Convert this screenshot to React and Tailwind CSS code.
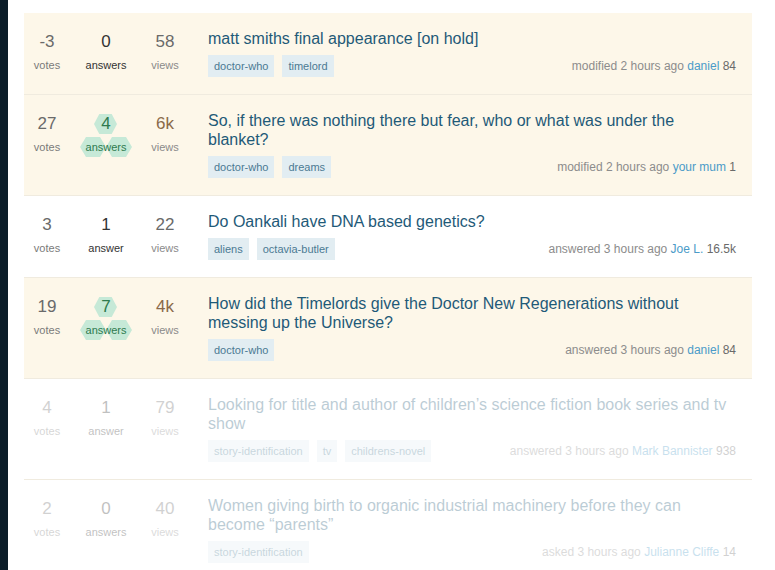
import React from 'react'

const questions = [
  {
    votes: '-3', answers: '0', views: '58', answered: false, hotViews: false,
    title: 'matt smiths final appearance [on hold]',
    tags: ['doctor-who', 'timelord'],
    action: 'modified 2 hours ago', user: 'daniel', rep: '84',
    bg: 'bg-[#fdf7e9]',
  },
  {
    votes: '27', answers: '4', views: '6k', answered: true, hotViews: true,
    title: 'So, if there was nothing there but fear, who or what was under the blanket?',
    tags: ['doctor-who', 'dreams'],
    action: 'modified 2 hours ago', user: 'your mum', rep: '1',
    bg: 'bg-[#fdf7e9]',
  },
  {
    votes: '3', answers: '1', views: '22', answered: false, hotViews: false, single: true,
    title: 'Do Oankali have DNA based genetics?',
    tags: ['aliens', 'octavia-butler'],
    action: 'answered 3 hours ago', user: 'Joe L.', rep: '16.5k',
    bg: 'bg-white',
  },
  {
    votes: '19', answers: '7', views: '4k', answered: true, hotViews: true,
    title: 'How did the Timelords give the Doctor New Regenerations without messing up the Universe?',
    tags: ['doctor-who'],
    action: 'answered 3 hours ago', user: 'daniel', rep: '84',
    bg: 'bg-[#fdf7e9]',
  },
  {
    votes: '4', answers: '1', views: '79', answered: false, hotViews: false, single: true, faded: true,
    title: "Looking for title and author of children\u2019s science fiction book series and tv show",
    tags: ['story-identification', 'tv', 'childrens-novel'],
    action: 'answered 3 hours ago', user: 'Mark Bannister', rep: '938',
    bg: 'bg-white',
  },
  {
    votes: '2', answers: '0', views: '40', answered: false, hotViews: false, faded: true,
    title: 'Women giving birth to organic industrial machinery before they can become \u201cparents\u201d',
    tags: ['story-identification'],
    action: 'asked 3 hours ago', user: 'Julianne Cliffe', rep: '14',
    bg: 'bg-white',
  },
]

function Hex({ className }) {
  return (
    <svg viewBox="0 0 26 20" preserveAspectRatio="none" className={className}>
      <polygon points="6,0 20,0 26,10 20,20 6,20 0,10" fill="#c6e9d7" />
    </svg>
  )
}

function AnswerStat({ q }) {
  if (q.answered) {
    return (
      <div className="w-[46px] flex flex-col items-center">
        <div className="relative h-[24px] w-[24px] flex items-center justify-center">
          <Hex className="absolute left-0 top-[2px] w-[23px] h-[20px]" />
          <span className="relative text-[17px] leading-[24px] text-[#2e7a4e]">{q.answers}</span>
        </div>
        <div className="relative mt-[3px] h-[16px] w-[52px] flex items-center justify-center">
          <Hex className="absolute left-0 top-[-2px] w-[26px] h-[20px]" />
          <Hex className="absolute left-[26px] top-[-2px] w-[26px] h-[20px]" />
          <span className="relative text-[11px] leading-[16px] text-[#2e7a4e]">answers</span>
        </div>
      </div>
    )
  }
  return (
    <div className="w-[46px] flex flex-col items-center">
      <span className="text-[17px] leading-[24px] text-[#333333]">{q.answers}</span>
      <span className="mt-[3px] text-[11px] leading-[16px] text-[#333333] whitespace-nowrap">{q.single ? 'answer' : 'answers'}</span>
    </div>
  )
}

function Row({ q }) {
  return (
    <div className={`flex pt-[16px] pb-[17px] border-b border-[#f0ebdf] ${q.bg}`}>
      <div className={`flex gap-[13px] w-[164px] shrink-0 pt-[1px] ${q.faded ? 'opacity-30' : ''}`}>
        <div className="w-[46px] flex flex-col items-center">
          <span className="text-[17px] leading-[24px] text-[#6a6a6a]">{q.votes}</span>
          <span className="mt-[3px] text-[11px] leading-[16px] text-[#7a7a7a]">votes</span>
        </div>
        <AnswerStat q={q} />
        <div className="w-[46px] flex flex-col items-center">
          <span className={`text-[17px] leading-[24px] ${q.hotViews ? 'text-[#8a6a4a]' : 'text-[#6a6a6a]'}`}>{q.views}</span>
          <span className="mt-[3px] text-[11px] leading-[16px] text-[#8a8a8a]">views</span>
        </div>
      </div>
      <div className={`flex-1 ml-[20px] pr-[16px] ${q.faded ? 'opacity-30' : ''}`}>
        <div className="text-[16px] leading-[19px] text-[#1f5a78]">{q.title}</div>
        <div className="mt-[7px] h-[22px] flex items-center justify-between">
          <div className="flex gap-[8px]">
            {q.tags.map((t) => (
              <span key={t} className="bg-[#e2edf2] text-[#4b7a92] text-[11px] leading-[22px] px-[6px]">{t}</span>
            ))}
          </div>
          <div className="text-[12px] leading-[16px] text-[#8c8c8c] whitespace-nowrap">
            {q.action} <span className="text-[#4b9bc8]">{q.user}</span> <span className="text-[#6a6a6a]">{q.rep}</span>
          </div>
        </div>
      </div>
    </div>
  )
}

export default function App() {
  return (
    <div className="flex min-h-[570px] h-[570px] overflow-hidden bg-white font-['Liberation_Sans',Arial,sans-serif]">
      <div className="w-[8px] shrink-0 bg-[#0b1d28]" />
      <div className="flex-1 pl-[16px] pr-[23px] pt-[13px]">
        {questions.map((q, i) => (
          <Row key={i} q={q} />
        ))}
      </div>
    </div>
  )
}
